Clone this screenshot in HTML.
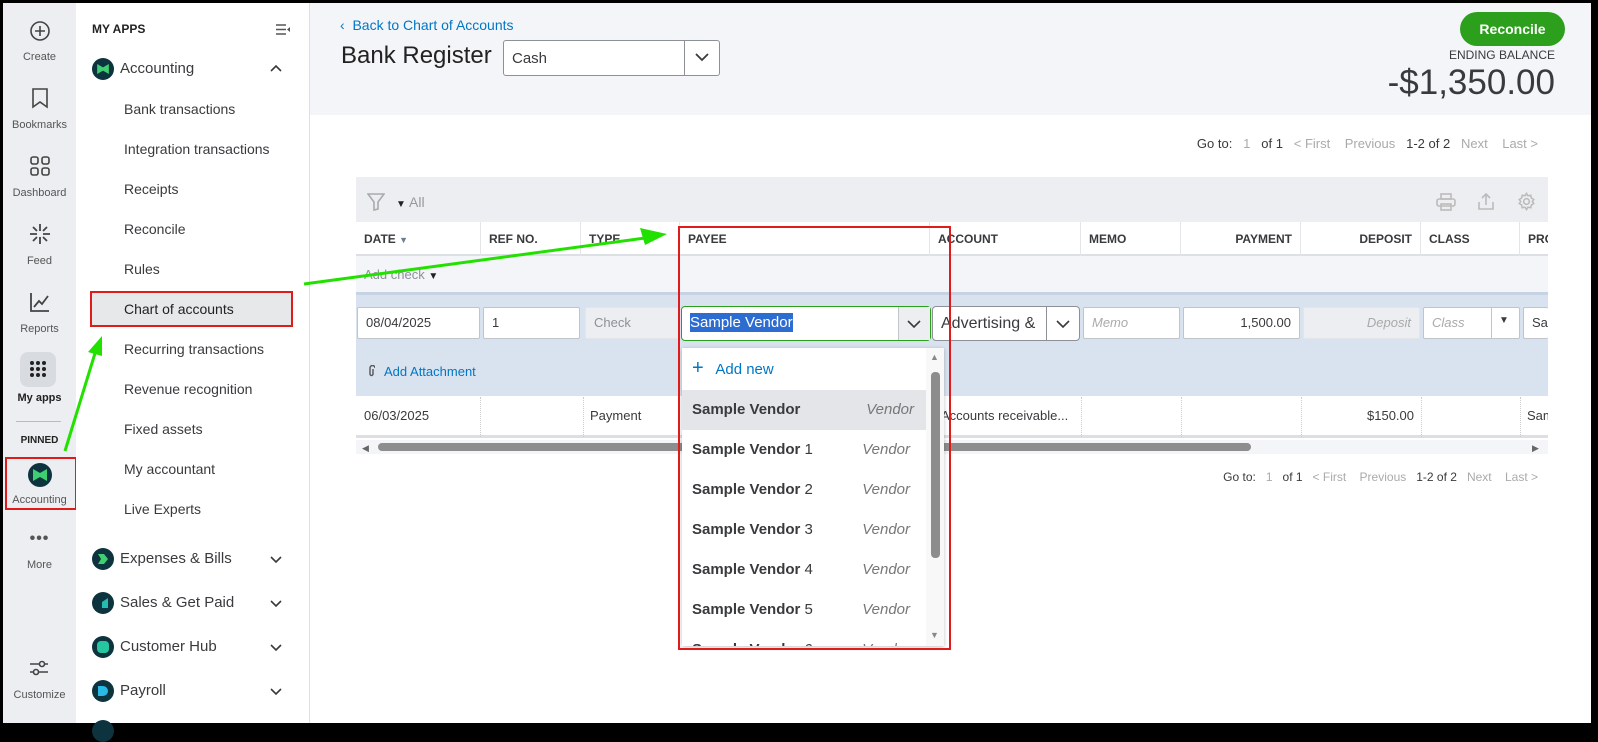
<!DOCTYPE html>
<html><head><meta charset="utf-8"><style>
*{box-sizing:border-box;margin:0;padding:0}
body{width:1598px;height:727px;background:#000;position:relative;overflow:hidden;font-family:"Liberation Sans",sans-serif;color:#393a3d}
.a{position:absolute}
.rail{left:3px;top:3px;width:73px;height:720px;background:#eceef1}
.rl{position:absolute;width:73px;text-align:center;font-size:11px;color:#555}
.panel{left:76px;top:3px;width:234px;height:720px;background:#fff;border-right:1px solid #dcdfe3}
.it{position:absolute;left:48px;font-size:14px;color:#393a3d}
.main{left:310px;top:3px;width:1281px;height:720px;background:#fff}
.hdr{left:310px;top:3px;width:1281px;height:112px;background:#f4f5f8}
.th{position:absolute;top:0;height:34px;line-height:34px;font-size:12px;font-weight:bold;color:#393a3d;border-right:1px solid #e3e5e8;padding:0 8px}
.inp{position:absolute;top:307px;height:32px;background:#fff;border:1px solid #c1c4c8;border-radius:2px;font-size:13px;line-height:30px;padding:0 8px}
.ph{color:#aaa;font-style:italic}
.dd{position:absolute;left:0;width:240px;height:40px;line-height:40px;font-size:15px;padding-left:10px}
.dd b{color:#393a3d}
.dd i{position:absolute;right:12px;color:#777;font-size:15px}
.ic{position:absolute;width:22px;height:22px;border-radius:50%;background:#0d333f}
.chev{position:absolute;left:194px}
.pg{position:absolute;font-size:12px;color:#aaa;white-space:nowrap}
.pg span{color:#393a3d}
</style></head><body>
<div class="a rail">
 <svg class="a" style="left:26px;top:17px" width="22" height="22" viewBox="0 0 22 22" fill="none" stroke="#444" stroke-width="1.6"><circle cx="11" cy="11" r="9"/><path d="M11 6v10M6 11h10"/></svg>
 <div class="rl" style="top:48px">Create</div>
 <svg class="a" style="left:28px;top:84px" width="18" height="22" viewBox="0 0 18 22" fill="none" stroke="#444" stroke-width="1.6"><path d="M2 2h14v18l-7-5-7 5z"/></svg>
 <div class="rl" style="top:116px">Bookmarks</div>
 <svg class="a" style="left:26px;top:152px" width="22" height="22" viewBox="0 0 22 22" fill="none" stroke="#444" stroke-width="1.6"><rect x="2" y="2" width="7" height="7" rx="2"/><rect x="13" y="2" width="7" height="7" rx="2"/><rect x="2" y="13" width="7" height="7" rx="2"/><rect x="13" y="13" width="7" height="7" rx="2"/></svg>
 <div class="rl" style="top:184px">Dashboard</div>
 <svg class="a" style="left:26px;top:220px" width="22" height="22" viewBox="0 0 22 22" fill="none" stroke="#444" stroke-width="1.8"><path d="M11 1v7M11 14v7M1 11h7M14 11h7M4 4l4 4M14 14l4 4M18 4l-4 4M8 14l-4 4"/></svg>
 <div class="rl" style="top:252px">Feed</div>
 <svg class="a" style="left:26px;top:288px" width="22" height="22" viewBox="0 0 22 22" fill="none" stroke="#444" stroke-width="1.8"><path d="M2 2v18h18M5 16l5-6 3 3 6-8"/></svg>
 <div class="rl" style="top:320px">Reports</div>
 <div class="a" style="left:17px;top:349px;width:36px;height:35px;background:#d8dbdf;border-radius:8px"></div>
 <svg class="a" style="left:26px;top:357px" width="18" height="18" viewBox="0 0 18 18" fill="#222"><circle cx="3" cy="3" r="2"/><circle cx="9" cy="3" r="2"/><circle cx="15" cy="3" r="2"/><circle cx="3" cy="9" r="2"/><circle cx="9" cy="9" r="2"/><circle cx="15" cy="9" r="2"/><circle cx="3" cy="15" r="2"/><circle cx="9" cy="15" r="2"/><circle cx="15" cy="15" r="2"/></svg>
 <div class="rl" style="top:389px;font-weight:bold;color:#222">My apps</div>
 <div class="a" style="left:13px;top:418px;width:45px;height:1px;background:#bbb"></div>
 <div class="rl" style="top:432px;font-weight:bold;font-size:10px;color:#222">PINNED</div>
 <div class="a" style="left:2px;top:454px;width:72px;height:53px;border:2px solid #e01b1b"></div>
 <div class="ic" style="left:25px;top:460px;width:24px;height:24px"></div>
 <svg class="a" style="left:30px;top:466px" width="14" height="12" viewBox="0 0 14 12" fill="#3ecf70"><path d="M0 0l7 4 7-4v12l-7-4-7 4z"/></svg>
 <div class="rl" style="top:491px">Accounting</div>
 <div class="rl" style="top:527px;font-size:16px;font-weight:bold;letter-spacing:1px">•••</div>
 <div class="rl" style="top:556px">More</div>
 <svg class="a" style="left:26px;top:656px" width="20" height="18" viewBox="0 0 20 18" fill="none" stroke="#444" stroke-width="1.6"><path d="M1 5h18M1 13h18"/><circle cx="13" cy="5" r="2.5" fill="#eceef1"/><circle cx="7" cy="13" r="2.5" fill="#eceef1"/></svg>
 <div class="rl" style="top:686px">Customize</div>
</div>

<div class="a panel">
 <div class="a" style="left:16px;top:19px;font-size:12px;font-weight:bold;color:#222">MY APPS</div>
 <svg class="a" style="left:200px;top:21px" width="14" height="11" viewBox="0 0 14 11" fill="none" stroke="#555" stroke-width="1.5"><path d="M0 1h10M0 5.5h10M0 10h10"/><path d="M14 3v5l-3-2.5z" fill="#555" stroke="none"/></svg>
 <div class="ic" style="left:16px;top:55px"></div>
 <svg class="a" style="left:21px;top:61px" width="12" height="10" viewBox="0 0 14 12" fill="#3ecf70"><path d="M0 0l7 4 7-4v12l-7-4-7 4z"/></svg>
 <div class="it" style="left:44px;top:57px;font-size:15px">Accounting</div>
 <svg class="chev" style="top:61px" width="12" height="8" viewBox="0 0 12 8" fill="none" stroke="#393a3d" stroke-width="1.6"><path d="M1 7l5-5 5 5"/></svg>
 <div class="it" style="top:98px">Bank transactions</div>
 <svg class="a" style="left:272px;top:99px" width="10" height="13" viewBox="0 0 10 13" fill="#393a3d"><path d="M0 0h10v13l-5-4-5 4z"/></svg>
 <div class="it" style="top:138px">Integration transactions</div>
 <div class="it" style="top:178px">Receipts</div>
 <div class="it" style="top:218px">Reconcile</div>
 <div class="it" style="top:258px">Rules</div>
 <div class="a" style="left:14px;top:288px;width:203px;height:36px;background:#e7e8ea;border:2px solid #e01b1b"></div>
 <div class="it" style="top:298px;color:#222">Chart of accounts</div>
 <div class="it" style="top:338px">Recurring transactions</div>
 <div class="it" style="top:378px">Revenue recognition</div>
 <div class="it" style="top:418px">Fixed assets</div>
 <div class="it" style="top:458px">My accountant</div>
 <div class="it" style="top:498px">Live Experts</div>
 <div class="ic" style="left:16px;top:545px"></div><div class="a" style="left:22px;top:551px;width:10px;height:10px;background:#3ecf70;clip-path:polygon(0 0,60% 0,100% 50%,60% 100%,0 100%,30% 50%)"></div>
 <div class="it" style="left:44px;top:547px;font-size:15px">Expenses &amp; Bills</div><svg class="chev" style="top:553px" width="12" height="8" viewBox="0 0 12 8" fill="none" stroke="#393a3d" stroke-width="1.6"><path d="M1 1l5 5 5-5"/></svg>
 <div class="ic" style="left:16px;top:589px"></div><div class="a" style="left:22px;top:595px;width:10px;height:10px;background:#22bcb0;clip-path:polygon(0 100%,40% 100%,40% 40%,100% 0,100% 100%,0 100%)"></div>
 <div class="it" style="left:44px;top:591px;font-size:15px">Sales &amp; Get Paid</div><svg class="chev" style="top:597px" width="12" height="8" viewBox="0 0 12 8" fill="none" stroke="#393a3d" stroke-width="1.6"><path d="M1 1l5 5 5-5"/></svg>
 <div class="ic" style="left:16px;top:633px"></div><div class="a" style="left:21px;top:638px;width:12px;height:12px;background:#26c6a0;border-radius:4px"></div>
 <div class="it" style="left:44px;top:635px;font-size:15px">Customer Hub</div><svg class="chev" style="top:641px" width="12" height="8" viewBox="0 0 12 8" fill="none" stroke="#393a3d" stroke-width="1.6"><path d="M1 1l5 5 5-5"/></svg>
 <div class="ic" style="left:16px;top:677px"></div><div class="a" style="left:22px;top:683px;width:10px;height:10px;background:#2ab8e6;border-radius:0 5px 5px 0"></div>
 <div class="it" style="left:44px;top:679px;font-size:15px">Payroll</div><svg class="chev" style="top:685px" width="12" height="8" viewBox="0 0 12 8" fill="none" stroke="#393a3d" stroke-width="1.6"><path d="M1 1l5 5 5-5"/></svg>
 <div class="ic" style="left:16px;top:717px"></div>
</div>

<div class="a main"></div>
<div class="a hdr"></div>
<div class="a" style="left:340px;top:17px;font-size:14px;color:#0077c5">‹&nbsp; Back to Chart of Accounts</div>
<div class="a" style="left:341px;top:42px;font-size:24px;color:#222">Bank Register</div>
<div class="a" style="left:503px;top:40px;width:217px;height:36px;background:#fff;border:1px solid #8d9096;border-radius:3px"></div>
<div class="a" style="left:512px;top:50px;font-size:15px">Cash</div>
<div class="a" style="left:684px;top:41px;width:1px;height:34px;background:#8d9096"></div>
<svg class="a" style="left:694px;top:52px" width="16" height="10" viewBox="0 0 16 10" fill="none" stroke="#393a3d" stroke-width="1.8"><path d="M2 2l6 6 6-6"/></svg>
<div class="a" style="left:1460px;top:12px;width:105px;height:34px;background:#2ca01c;border-radius:17px;color:#fff;font-weight:bold;font-size:14px;text-align:center;line-height:34px">Reconcile</div>
<div class="a" style="right:43px;top:48px;font-size:12px;color:#393a3d">ENDING BALANCE</div>
<div class="a" style="right:43px;top:63px;font-size:35px;color:#393a3d">-$1,350.00</div>

<div class="pg" style="right:60px;top:136px;font-size:13px"><span>Go to:</span>&nbsp;&nbsp; 1 &nbsp;&nbsp;<span>of 1</span>&nbsp;&nbsp; &lt; First &nbsp;&nbsp; Previous &nbsp;&nbsp;<span>1-2 of 2</span>&nbsp;&nbsp; Next &nbsp;&nbsp; Last &gt;</div>

<div class="a" style="left:356px;top:177px;width:1192px;height:45px;background:#eceef1"></div>
<svg class="a" style="left:367px;top:193px" width="18" height="18" viewBox="0 0 18 18" fill="none" stroke="#aaa" stroke-width="1.6"><path d="M1 1h16l-6 8v7l-4 1V9z"/></svg>
<div class="a" style="left:396px;top:194px;font-size:14px;color:#999"><span style="color:#222;font-size:10px">▼</span> All</div>
<svg class="a" style="left:1436px;top:193px" width="20" height="18" viewBox="0 0 20 18" fill="none" stroke="#bbb" stroke-width="1.6"><rect x="5" y="1" width="10" height="5"/><rect x="1" y="6" width="18" height="7" rx="2"/><rect x="5" y="11" width="10" height="6"/></svg>
<svg class="a" style="left:1477px;top:192px" width="18" height="19" viewBox="0 0 18 19" fill="none" stroke="#bbb" stroke-width="1.6"><path d="M9 13V2M5 6l4-4 4 4M2 10v7h14v-7"/></svg>
<svg class="a" style="left:1517px;top:192px" width="19" height="19" viewBox="0 0 20 20" fill="none" stroke="#bbb" stroke-width="1.6"><circle cx="10" cy="10" r="3"/><path d="M10 1.5l1.5 2.5 3-.6.6 3 2.5 1.5-1.5 2.1 1.5 2.1-2.5 1.5-.6 3-3-.6L10 18.5l-1.5-2.5-3 .6-.6-3L2.4 12.1 3.9 10 2.4 7.9l2.5-1.5.6-3 3 .6z"/></svg>

<div class="a" style="left:356px;top:222px;width:1192px;height:34px;background:#fff;border-bottom:2px solid #dcdfe3">
 <div class="th" style="left:0;width:125px">DATE <span style="color:#6b7d8f;font-size:9px">▼</span></div>
 <div class="th" style="left:125px;width:100px">REF NO.</div>
 <div class="th" style="left:225px;width:99px">TYPE</div>
 <div class="th" style="left:324px;width:250px">PAYEE</div>
 <div class="th" style="left:574px;width:151px">ACCOUNT</div>
 <div class="th" style="left:725px;width:100px">MEMO</div>
 <div class="th" style="left:825px;width:120px;text-align:right">PAYMENT</div>
 <div class="th" style="left:945px;width:120px;text-align:right">DEPOSIT</div>
 <div class="th" style="left:1065px;width:99px">CLASS</div>
 <div class="th" style="left:1164px;width:28px;border:none;overflow:hidden">PRO</div>
</div>
<div class="a" style="left:356px;top:256px;width:1192px;height:36px;background:#f4f5f8"></div>
<div class="a" style="left:364px;top:267px;font-size:13px;color:#8d9096">Add check <span style="color:#222;font-size:10px">▼</span></div>
<div class="a" style="left:356px;top:292px;width:1192px;height:104px;background:#d9e3ef;border-top:3px solid #c7d3e2"></div>
<div class="inp" style="left:357px;width:123px">08/04/2025</div>
<div class="inp" style="left:483px;width:97px">1</div>
<div class="inp" style="left:585px;width:94px;background:#eceef1;color:#8d9096;border-color:#e3e5e8">Check</div>
<div class="inp" style="left:681px;width:250px;height:35px;top:306px;border:1.5px solid #2ca01c;border-radius:4px;line-height:32px;font-size:15px"><span style="background:#2d6cd0;color:#fff;padding:1px 0">Sample Vendor</span></div>
<div class="a" style="left:898px;top:307px;width:32px;height:33px;background:#eceef1;border-left:1px solid #c1c4c8"></div>
<svg class="a" style="left:906px;top:319px" width="16" height="10" viewBox="0 0 16 10" fill="none" stroke="#393a3d" stroke-width="1.6"><path d="M2 2l6 6 6-6"/></svg>
<div class="inp" style="left:932px;width:148px;height:35px;top:306px;border-color:#8d9096;border-radius:4px;font-size:16px;line-height:33px;overflow:hidden;white-space:nowrap">Advertising &amp;</div>
<div class="a" style="left:1046px;top:307px;width:1px;height:33px;background:#8d9096"></div>
<svg class="a" style="left:1055px;top:319px" width="16" height="10" viewBox="0 0 16 10" fill="none" stroke="#393a3d" stroke-width="1.6"><path d="M2 2l6 6 6-6"/></svg>
<div class="inp ph" style="left:1083px;width:97px">Memo</div>
<div class="inp" style="left:1183px;width:117px;text-align:right">1,500.00</div>
<div class="inp ph" style="left:1303px;width:117px;text-align:right;background:#eceef1;border-color:#e3e5e8">Deposit</div>
<div class="inp ph" style="left:1423px;width:97px">Class</div>
<div class="a" style="left:1491px;top:308px;width:1px;height:30px;background:#c1c4c8"></div>
<div class="a" style="left:1499px;top:315px;font-size:10px">▼</div>
<div class="inp" style="left:1523px;width:25px;border-right:none;overflow:hidden">Sam</div>
<svg class="a" style="left:368px;top:365px" width="7" height="12" viewBox="0 0 7 12" fill="none" stroke="#555" stroke-width="1.4"><path d="M5 4v5a1.5 1.5 0 0 1-3 0V3a2.5 2.5 0 0 1 5 0"/></svg>
<div class="a" style="left:384px;top:364px;font-size:13px;color:#0077c5">Add Attachment</div>

<div class="a" style="left:356px;top:396px;width:1192px;height:42px;background:#fff;border-bottom:3px solid #dcdfe3"></div>
<div class="a" style="left:480px;top:397px;height:40px;border-left:1px dotted #ccc"></div>
<div class="a" style="left:583px;top:397px;height:40px;border-left:1px dotted #ccc"></div>
<div class="a" style="left:1081px;top:397px;height:40px;border-left:1px dotted #ccc"></div>
<div class="a" style="left:1181px;top:397px;height:40px;border-left:1px dotted #ccc"></div>
<div class="a" style="left:1301px;top:397px;height:40px;border-left:1px dotted #ccc"></div>
<div class="a" style="left:1421px;top:397px;height:40px;border-left:1px dotted #ccc"></div>
<div class="a" style="left:1520px;top:397px;height:40px;border-left:1px dotted #ccc"></div>
<div class="a" style="left:364px;top:408px;font-size:13px">06/03/2025</div>
<div class="a" style="left:590px;top:408px;font-size:13px">Payment</div>
<div class="a" style="left:941px;top:408px;font-size:13px">Accounts receivable...</div>
<div class="a" style="left:1300px;top:408px;width:114px;text-align:right;font-size:13px">$150.00</div>
<div class="a" style="left:1527px;top:408px;font-size:13px;width:21px;overflow:hidden">Sam</div>
<div class="a" style="left:356px;top:440px;width:1192px;height:14px;background:#f4f5f8"></div>
<div class="a" style="left:362px;top:443px;font-size:9px;color:#666">◀</div>
<div class="a" style="left:1532px;top:443px;font-size:9px;color:#666">▶</div>
<div class="a" style="left:378px;top:443px;width:873px;height:8px;background:#8d8d8d;border-radius:4px"></div>

<div class="pg" style="right:60px;top:470px"><span>Go to:</span>&nbsp;&nbsp; 1 &nbsp;&nbsp;<span>of 1</span>&nbsp;&nbsp; &lt; First &nbsp;&nbsp; Previous &nbsp;&nbsp;<span>1-2 of 2</span>&nbsp;&nbsp; Next &nbsp;&nbsp; Last &gt;</div>

<div class="a" style="left:682px;top:348px;width:262px;height:298px;background:#fff;box-shadow:0 1px 4px rgba(0,0,0,.25);overflow:hidden">
 <div class="dd" style="top:0;height:40px;color:#0077c5"><span style="font-size:20px">+</span>&nbsp;&nbsp; Add new</div>
 <div class="dd" style="top:42px;background:#e3e5e8;width:244px"><b>Sample Vendor</b><i>Vendor</i></div>
 <div class="dd" style="top:82px"><b>Sample Vendor</b> 1<i>Vendor</i></div>
 <div class="dd" style="top:122px"><b>Sample Vendor</b> 2<i>Vendor</i></div>
 <div class="dd" style="top:162px"><b>Sample Vendor</b> 3<i>Vendor</i></div>
 <div class="dd" style="top:202px"><b>Sample Vendor</b> 4<i>Vendor</i></div>
 <div class="dd" style="top:242px"><b>Sample Vendor</b> 5<i>Vendor</i></div>
 <div class="dd" style="top:282px"><b>Sample Vendor</b> 6<i>Vendor</i></div>
 <div class="a" style="left:244px;top:0;width:18px;height:298px;background:#f8f8f8"></div>
 <div class="a" style="left:248px;top:4px;font-size:9px;color:#888">▲</div>
 <div class="a" style="left:248px;top:282px;font-size:9px;color:#888">▼</div>
 <div class="a" style="left:249px;top:24px;width:9px;height:186px;background:#8d8d8d;border-radius:4px"></div>
</div>
<div class="a" style="left:678px;top:226px;width:273px;height:424px;border:2px solid #e01b1b"></div>

<svg class="a" style="left:0;top:0" width="1598" height="727" viewBox="0 0 1598 727">
 <path d="M304 284L645 238" stroke="#22e000" stroke-width="3"/>
 <path d="M667 234L640 228L645 245z" fill="#22e000"/>
 <path d="M65 451L96 350" stroke="#22e000" stroke-width="3"/>
 <path d="M102 336L88 352L102 356z" fill="#22e000"/>
</svg>
</body></html>
